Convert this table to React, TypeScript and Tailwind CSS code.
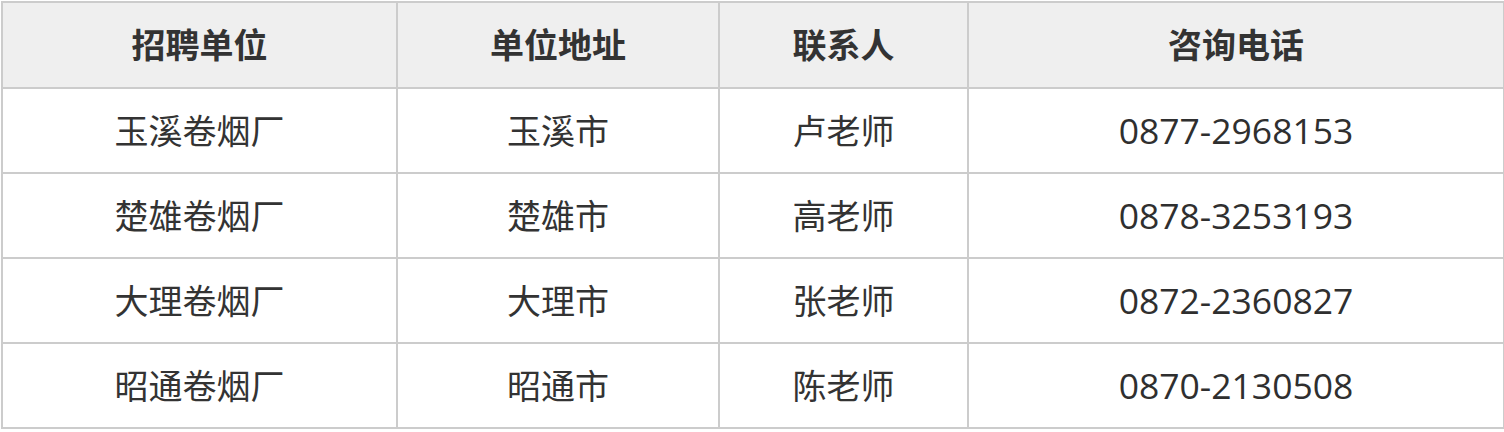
import React from "react";

const rows = [
  ["玉溪卷烟厂", "玉溪市", "卢老师", "0877-2968153"],
  ["楚雄卷烟厂", "楚雄市", "高老师", "0878-3253193"],
  ["大理卷烟厂", "大理市", "张老师", "0872-2360827"],
  ["昭通卷烟厂", "昭通市", "陈老师", "0870-2130508"],
];

export default function App() {
  return (
    <div className="w-[1504px] h-[432px] bg-white pt-[1px] pl-[1px]">
      <table
        className="table-fixed border-collapse border-2 border-[#cccccc] text-[#333333] text-[34px] w-[1502px]"
        style={{ fontFamily: '"Open Sans", "Noto Sans CJK SC", sans-serif' }}
      >
        <colgroup>
          <col className="w-[395px]" />
          <col className="w-[322px]" />
          <col className="w-[249px]" />
          <col className="w-[536px]" />
        </colgroup>
        <thead>
          <tr className="h-[86px] bg-[#efefef]">
            {["招聘单位", "单位地址", "联系人", "咨询电话"].map((h) => (
              <th key={h} className="border-2 border-[#cccccc] font-bold text-center align-middle p-0 leading-none">
                {h}
              </th>
            ))}
          </tr>
        </thead>
        <tbody>
          {rows.map((r) => (
            <tr key={r[0]} className="h-[85px]">
              {r.map((c, i) => (
                <td
                  key={i}
                  className={
                    i === 3
                      ? "border-2 border-[#cccccc] text-center align-middle p-0 leading-none text-[35.5px] text-[#2f2f2f]"
                      : "border-2 border-[#cccccc] text-center align-middle p-0 leading-none"
                  }
                >
                  {c}
                </td>
              ))}
            </tr>
          ))}
        </tbody>
      </table>
    </div>
  );
}
